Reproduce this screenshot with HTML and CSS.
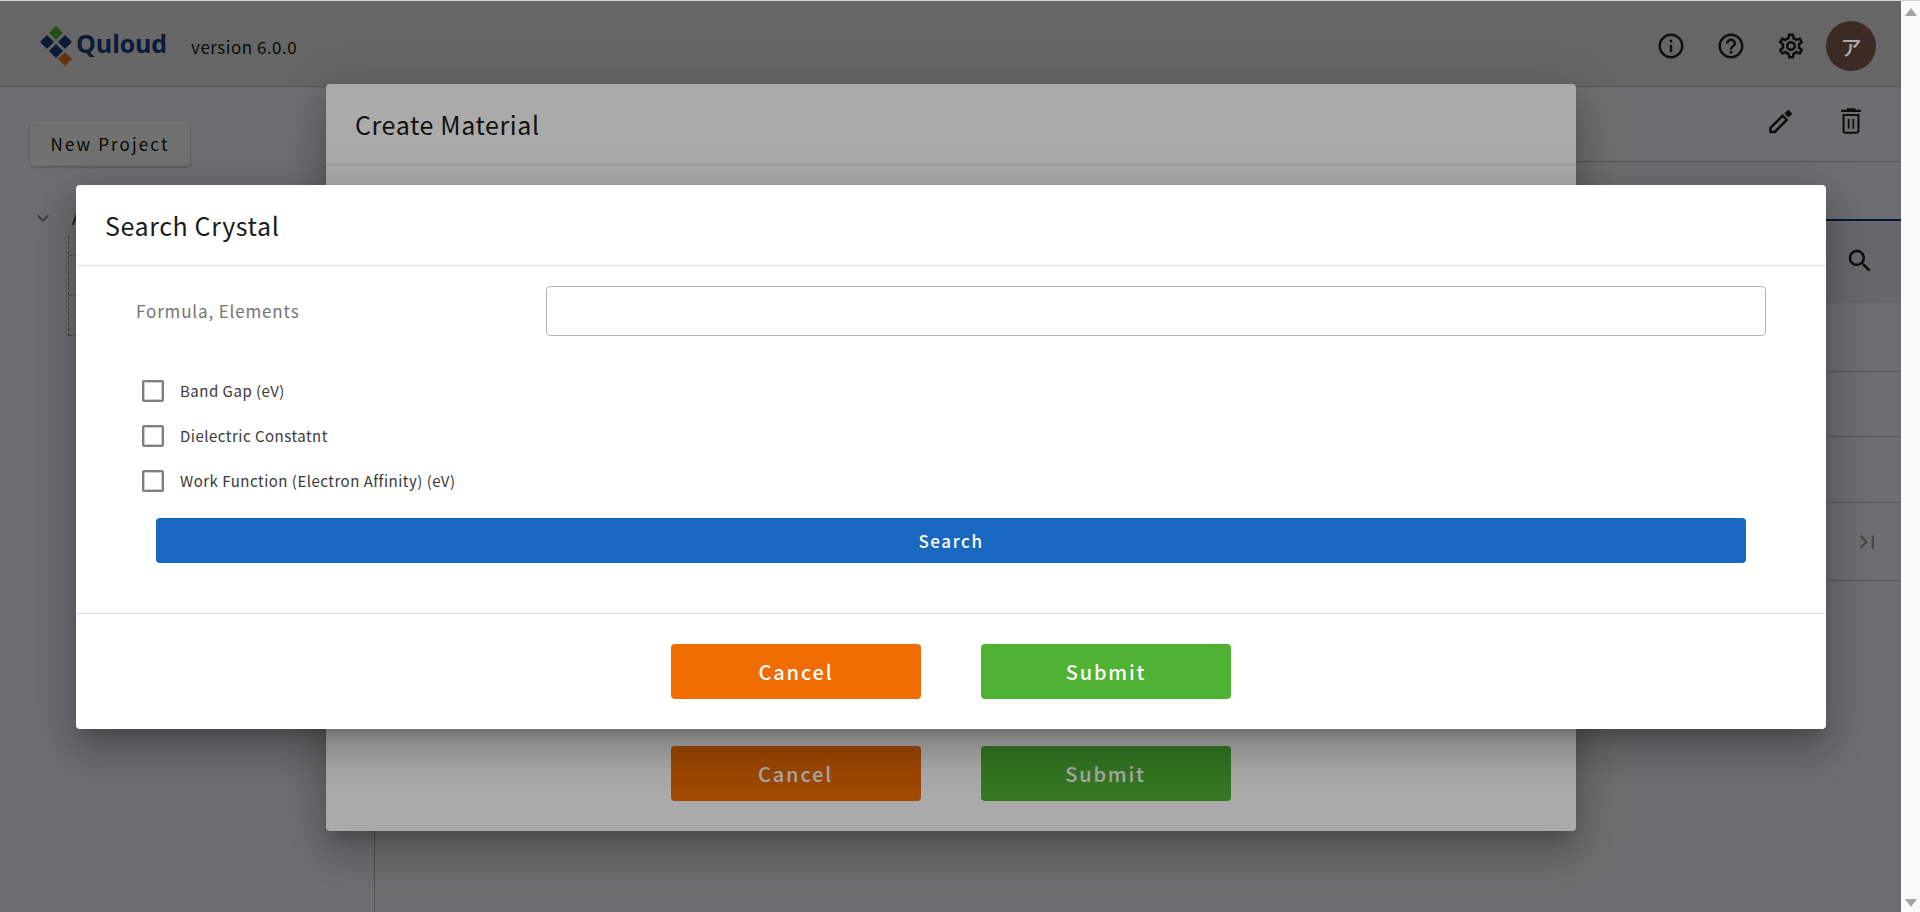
FILE: index.html
```html
<!DOCTYPE html>
<html lang="en">
<head>
<meta charset="utf-8">
<title>Quloud</title>
<link rel="stylesheet" href="styles.css">
</head>
<body>
<div class="window">
  <div class="app">
    <header class="topbar">
      <div class="brand">
        <svg class="logo-mark" viewBox="0 0 40 46" aria-hidden="true">
          <path class="d-green" d="M20 1l7 7-7 7-7-7z"/>
          <path class="d-navy" d="M11 10l7 7-7 7-7-7z"/>
          <path class="d-navy" d="M29 10l7 7-7 7-7-7z"/>
          <path class="d-navy" d="M20 19l7 7-7 7-7-7z"/>
          <path class="d-orange" d="M29 27l7 7-7 7-7-7z"/>
        </svg>
        <span class="logo-text">Quloud</span>
        <span class="version">version 6.0.0</span>
      </div>
      <div class="top-actions">
        <svg class="icon30" viewBox="0 0 24 24"><path d="M11 7h2v2h-2zm0 4h2v6h-2zm1-9C6.48 2 2 6.48 2 12s4.48 10 10 10 10-4.48 10-10S17.52 2 12 2zm0 18c-4.41 0-8-3.59-8-8s3.59-8 8-8 8 3.59 8 8-3.59 8-8 8z"/></svg>
        <svg class="icon30" viewBox="0 0 24 24"><path d="M11 18h2v-2h-2v2zm1-16C6.48 2 2 6.48 2 12s4.48 10 10 10 10-4.48 10-10S17.52 2 12 2zm0 18c-4.41 0-8-3.59-8-8s3.59-8 8-8 8 3.59 8 8-3.59 8-8 8zm0-14c-2.21 0-4 1.79-4 4h2c0-1.1.9-2 2-2s2 .9 2 2c0 2-3 1.75-3 5h2c0-2.25 3-2.5 3-5 0-2.21-1.79-4-4-4z"/></svg>
        <svg class="icon30" viewBox="0 0 24 24"><path d="M19.43 12.98c.04-.32.07-.64.07-.98 0-.34-.03-.66-.07-.98l2.11-1.65c.19-.15.24-.42.12-.64l-2-3.46c-.09-.16-.26-.25-.44-.25-.06 0-.12.01-.17.03l-2.49 1c-.52-.4-1.08-.73-1.69-.98l-.38-2.65C14.46 2.18 14.25 2 14 2h-4c-.25 0-.46.18-.49.42l-.38 2.65c-.61.25-1.17.59-1.69.98l-2.49-1c-.06-.02-.12-.03-.18-.03-.17 0-.34.09-.43.25l-2 3.46c-.13.22-.07.49.12.64l2.11 1.65c-.04.32-.07.65-.07.98 0 .33.03.66.07.98l-2.11 1.65c-.19.15-.24.42-.12.64l2 3.46c.09.16.26.25.44.25.06 0 .12-.01.17-.03l2.49-1c.52.4 1.08.73 1.69.98l.38 2.65c.03.24.24.42.49.42h4c.25 0 .46-.18.49-.42l.38-2.65c.61-.25 1.17-.59 1.69-.98l2.49 1c.06.02.12.03.18.03.17 0 .34-.09.43-.25l2-3.46c.12-.22.07-.49-.12-.64l-2.11-1.65zm-1.98-1.71c.04.31.05.52.05.73 0 .21-.02.43-.05.73l-.14 1.13.89.7 1.08.84-.7 1.21-1.27-.51-1.04-.42-.9.68c-.43.32-.84.56-1.25.73l-1.06.43-.16 1.13-.2 1.35h-1.4l-.19-1.35-.16-1.13-1.06-.43c-.43-.18-.83-.41-1.23-.71l-.91-.7-1.06.43-1.27.51-.7-1.21 1.08-.84.89-.7-.14-1.13c-.03-.31-.05-.54-.05-.74s.02-.43.05-.73l.14-1.13-.89-.7-1.08-.84.7-1.21 1.27.51 1.04.42.9-.68c.43-.32.84-.56 1.25-.73l1.06-.43.16-1.13.2-1.35h1.39l.19 1.35.16 1.13 1.06.43c.43.18.83.41 1.23.71l.91.7 1.06-.43 1.27-.51.7 1.21-1.07.85-.89.7.14 1.13zM12 8c-2.21 0-4 1.79-4 4s1.79 4 4 4 4-1.79 4-4-1.79-4-4-4zm0 6c-1.1 0-2-.9-2-2s.9-2 2-2 2 .9 2 2-.9 2-2 2z"/></svg>
        <div class="avatar">ア</div>
      </div>
    </header>
    <div class="workspace">
      <aside class="sidebar">
        <button class="new-project" type="button">New Project</button>
        <div class="tree-root">
          <svg class="chevron" viewBox="0 0 24 24"><path d="M16.59 8.59L12 13.17 7.41 8.59 6 10l6 6 6-6z"/></svg>
          <span class="tree-label">A</span>
        </div>
        <div class="tree-children">
          <div class="tree-node node-first"></div>
          <div class="tree-node"></div>
          <div class="tree-node"></div>
        </div>
      </aside>
      <main class="main">
        <div class="toolbar">
          <svg class="icon30" viewBox="0 0 30 30"><path class="pencil-body" d="M4.5 26v-4.2L16.6 9.7l4.2 4.2L8.7 26z"/><path d="M18.4 7.4l2.9-2.9c.6-.6 1.4-.6 2 0l2.2 2.2c.6.6.6 1.4 0 2l-2.9 2.9z"/></svg>
          <svg class="icon34" viewBox="0 0 24 24"><path d="M6 19c0 1.1.9 2 2 2h8c1.1 0 2-.9 2-2V7H6v12zM7.5 8.5h9V19c0 .3-.2.5-.5.5H8c-.3 0-.5-.2-.5-.5V8.5zM15.5 4l-1-1h-5l-1 1H5v1.6h14V4h-3.5zM9.7 10.5h1.3v7H9.7zM13 10.5h1.3v7H13z"/></svg>
        </div>
        <div class="tabs"></div>
        <div class="table-head">
          <svg class="icon28" viewBox="0 0 24 24"><path d="M15.5 14h-.79l-.28-.27C15.41 12.59 16 11.11 16 9.5 16 5.91 13.09 3 9.5 3S3 5.91 3 9.5 5.91 16 9.5 16c1.61 0 3.09-.59 4.23-1.57l.27.28v.79l5 4.99L20.49 19l-4.99-5zm-6 0C7.01 14 5 11.99 5 9.5S7.01 5 9.5 5 14 7.01 14 9.5 11.99 14 9.5 14z"/></svg>
        </div>
        <div class="table-row row-a"></div>
        <div class="table-row row-b"></div>
        <div class="table-row row-c"></div>
        <div class="table-row pager">
          <svg class="icon24 muted" viewBox="0 0 24 24"><path d="M5.59 7.41L10.18 12l-4.59 4.59L7 18l6-6-6-6zM16 6h2v12h-2z"/></svg>
        </div>
      </main>
    </div>

    <div class="backdrop backdrop-create">
      <section class="modal modal-create">
        <h2 class="modal-title title-create">Create Material</h2>
        <div class="modal-body-create"></div>
        <div class="modal-actions actions-create">
          <button class="action cancel" type="button">Cancel</button>
          <button class="action submit" type="button">Submit</button>
        </div>
      </section>
    </div>

    <div class="backdrop backdrop-search">
      <section class="modal modal-search">
        <h2 class="modal-title title-search">Search Crystal</h2>
        <div class="search-body">
          <div class="field">
            <label class="field-label" for="formula">Formula, Elements</label>
            <input class="field-input" id="formula" type="text">
          </div>
          <div class="checks">
            <label class="check"><span class="box"></span>Band Gap (eV)</label>
            <label class="check"><span class="box"></span>Dielectric Constatnt</label>
            <label class="check"><span class="box"></span>Work Function (Electron Affinity) (eV)</label>
          </div>
          <button class="search-btn" type="button">Search</button>
        </div>
        <div class="modal-actions actions-search">
          <button class="action cancel" type="button">Cancel</button>
          <button class="action submit" type="button">Submit</button>
        </div>
      </section>
    </div>
  </div>
  <div class="scrollbar">
    <span class="arrow-up"></span>
    <span class="arrow-down"></span>
  </div>
</div>
</body>
</html>
```
FILE: styles.css
```css
* { box-sizing: border-box; }
html, body { margin: 0; height: 100%; overflow: hidden; }
body {
  font-family: "Noto Sans CJK JP", "Noto Sans", sans-serif;
  color: #1c1c1c;
  background: #fff;
}
button { font-family: inherit; border: 0; cursor: pointer; }
h2 { margin: 0; font-weight: 400; }

.window { display: flex; height: 912px; width: 1920px; border-top: 1px solid #d4d4d4; }
.app { position: relative; width: 1901px; height: 911px; display: flex; flex-direction: column; background: #f9fafc; overflow: hidden; }

/* scrollbar */
.scrollbar { width: 19px; background: #fafafa; display: flex; flex-direction: column; justify-content: space-between; align-items: center; padding: 7px 0 5px; }
.arrow-up, .arrow-down { width: 0; height: 0; border-left: 6.5px solid transparent; border-right: 6.5px solid transparent; }
.arrow-up { border-bottom: 8px solid #a3a3a3; }
.arrow-down { border-top: 8px solid #a3a3a3; }

/* top bar */
.topbar { height: 86px; flex: none; display: flex; justify-content: space-between; align-items: center; background: #e6e6e6; border-bottom: 1px solid #bdbdbd; padding: 0 25px 1px 36px; }
.brand { display: flex; align-items: center; }
.logo-mark { width: 40px; height: 46px; margin-top: 9px; }
.d-green { fill: #55ad3a; }
.d-navy { fill: #1b3d80; }
.d-orange { fill: #e2751b; }
.logo-text { font-family: "Open Sans", sans-serif; font-weight: 700; font-size: 25px; color: #1b3d80; letter-spacing: -.1px; margin-left: 0; line-height: 1; }
.version { margin-left: 24px; font-size: 17px; letter-spacing: .5px; margin-top: 6px; }
.top-actions { display: flex; align-items: center; gap: 30px; margin-top: 6px; }
.avatar { position: relative; z-index: 1; width: 50px; height: 50px; border-radius: 50%; background: #3c2a24; color: #aaa; display: flex; align-items: center; justify-content: center; font-size: 21px; font-weight: 500; margin-left: -10px; }

.icon30 { width: 30px; height: 30px; fill: #222; flex: none; }
.icon34 { width: 34px; height: 34px; fill: #222; flex: none; }
.icon28 { width: 30px; height: 30px; fill: #222; }
.icon24 { width: 28px; height: 28px; }
.muted { fill: #a6a6a6; }
.pencil-body { fill: none; stroke: #222; stroke-width: 2.6; stroke-linejoin: round; }

/* workspace */
.workspace { flex: 1; display: flex; min-height: 0; }
.sidebar { width: 375px; flex: none; border-right: 1px solid #b8b8b8; padding: 34px 30px; background: #f7f9fc; }
.new-project { display: block; width: 160px; height: 45px; border-radius: 4px; background: #fff; color: #111; font-size: 17px; letter-spacing: 2.1px; box-shadow: 0 1px 3px rgba(0,0,0,.3); }
.tree-root { display: flex; align-items: center; height: 28px; margin-top: 38px; }
.chevron { width: 24px; height: 24px; fill: #888; margin-left: 1px; }
.tree-label { margin-left: 17px; font-size: 16px; }
.tree-children { margin: 4px 0 0 38px; width: 200px; border-left: 1px dashed #999; }
.tree-node { height: 40px; border-bottom: 1px dashed #999; }
.node-first { height: 20px; }

.main { flex: 1; min-width: 0; display: flex; flex-direction: column; }
.toolbar { height: 75px; flex: none; display: flex; justify-content: flex-end; align-items: center; gap: 38px; padding: 0 33px 7px 0; border-bottom: 1px solid #bdbdbd; }
.tabs { height: 59px; flex: none; border-bottom: 2px solid #0d3a8c; }
.table-head { height: 82px; flex: none; display: flex; justify-content: flex-end; align-items: center; padding: 0 26px 2px 0; background: #e8eaed; }
.table-row { flex: none; border-bottom: 1px solid #c4c4c4; }
.row-a { height: 69px; }
.row-b { height: 65px; }
.row-c { height: 66px; }
.pager { height: 78px; display: flex; justify-content: flex-end; align-items: center; padding: 0 20px 0 0; }

/* overlays */
.backdrop { position: absolute; inset: 0; background: rgba(0,0,0,.335); }
.modal { position: absolute; background: #fff; border-radius: 4px; display: flex; flex-direction: column; box-shadow: 0 11px 15px -7px rgba(0,0,0,.2), 0 24px 38px 3px rgba(0,0,0,.14), 0 9px 46px 8px rgba(0,0,0,.12); }
.modal-create { left: 326px; top: 83px; width: 1250px; height: 747px; }
.modal-search { left: 76px; top: 184px; width: 1750px; height: 544px; }
.modal-title { font-size: 25px; letter-spacing: .6px; border-bottom: 1px solid #e2e2e2; flex: none; line-height: 1; display: flex; align-items: center; padding-left: 29px; height: 81px; color: #1a1a1a; }
.modal-body-create { flex: 1; }
.modal-actions { display: flex; justify-content: center; gap: 60px; flex: none; }
.actions-create { padding: 0 0 30px; margin-left: -1px; }
.actions-search { border-top: 1px solid #e2e2e2; height: 116px; padding-top: 30px; }
.action { width: 250px; height: 55px; border-radius: 4px; color: #fff; font-size: 20px; font-weight: 500; letter-spacing: 1.8px; }
.cancel { background: #ee6c00; }
.submit { background: #4fb233; }

/* search body */
.search-body { flex: 1; padding: 20px 60px 0 60px; display: flex; flex-direction: column; }
.field { display: flex; align-items: center; height: 50px; }
.field-label { width: 410px; font-size: 17px; letter-spacing: .85px; color: #757575; flex: none; padding-bottom: 2px; }
.field-input { flex: 1; height: 50px; border: 1px solid #b5b5b5; border-radius: 4px; background: #fff; }
.checks { display: flex; flex-direction: column; gap: 15px; margin: 39px 0 0 6px; }
.check { display: flex; align-items: center; height: 30px; font-size: 15px; letter-spacing: .5px; color: #3a3a3a; }
.box { width: 22px; height: 22px; border: 2px solid #7f7f7f; box-shadow: inset 0 0 0 1px rgba(127,127,127,.4); border-radius: 2px; margin: 1px 16px 0 0; flex: none; }
.search-btn { height: 45px; margin: 23px 20px 0; background: #1867c0; color: #fff; font-size: 17px; font-weight: 500; letter-spacing: 1.6px; border-radius: 4px; }
```
